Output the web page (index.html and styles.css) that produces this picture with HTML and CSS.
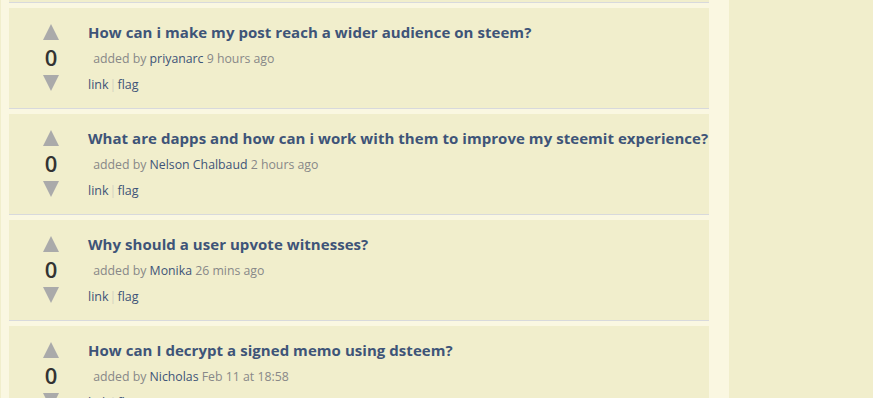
FILE: index.html
```html
<!DOCTYPE html>
<html>
<head>
<meta charset="utf-8">
<link rel="stylesheet" href="styles.css">
</head>
<body>
<div class="col">
  <div class="stub"></div>
  <div class="card">
    <div class="vote"><span class="up"></span><span class="score">0</span><span class="down"></span></div>
    <div class="body">
      <a class="title">How can i make my post reach a wider audience on steem?</a>
      <div class="meta">&nbsp;added by <a>priyanarc</a> 9 hours ago</div>
      <div class="actions"><a>link</a><span class="sep">|</span><a>flag</a></div>
    </div>
  </div>
  <div class="card">
    <div class="vote"><span class="up"></span><span class="score">0</span><span class="down"></span></div>
    <div class="body">
      <a class="title">What are dapps and how can i work with them to improve my steemit experience?</a>
      <div class="meta">&nbsp;added by <a>Nelson Chalbaud</a> 2 hours ago</div>
      <div class="actions"><a>link</a><span class="sep">|</span><a>flag</a></div>
    </div>
  </div>
  <div class="card">
    <div class="vote"><span class="up"></span><span class="score">0</span><span class="down"></span></div>
    <div class="body">
      <a class="title">Why should a user upvote witnesses?</a>
      <div class="meta">&nbsp;added by <a>Monika</a> 26 mins ago</div>
      <div class="actions"><a>link</a><span class="sep">|</span><a>flag</a></div>
    </div>
  </div>
  <div class="card">
    <div class="vote"><span class="up"></span><span class="score">0</span><span class="down"></span></div>
    <div class="body">
      <a class="title">How can I decrypt a signed memo using dsteem?</a>
      <div class="meta">&nbsp;added by <a>Nicholas</a> Feb 11 at 18:58</div>
      <div class="actions"><a>link</a><span class="sep">|</span><a>flag</a></div>
    </div>
  </div>
</div>
</body>
</html>
```
FILE: styles.css
```css
html, body {
  margin: 0;
  padding: 0;
  background: #f1eecc;
  height: 100%;
  overflow: hidden;
}
body {
  font-family: "Open Sans", "Noto Sans", sans-serif;
}
.col {
  width: 700px;
  margin-left: 1px;
  padding: 0 20px 0 8px;
  background: #faf7e1;
  min-height: 100%;
}
.stub {
  height: 2px;
  background: #f1eecc;
  border-bottom: 1px solid #d8d9dc;
  margin-bottom: 5px;
}
.card {
  display: flex;
  height: 84px;
  padding: 16px 0 0 22px;
  background: #f1eecc;
  border-bottom: 1px solid #d8d9dc;
  margin-bottom: 5px;
  gap: 17px;
}
.vote {
  width: 40px;
  display: flex;
  flex-direction: column;
  align-items: center;
}
.up {
  width: 0;
  height: 0;
  border-left: 8px solid transparent;
  border-right: 8px solid transparent;
  border-bottom: 16px solid #aaaaaa;
}
.down {
  width: 0;
  height: 0;
  border-left: 8px solid transparent;
  border-right: 8px solid transparent;
  border-top: 16px solid #aaaaaa;
  margin-top: 1px;
}
.score {
  font-size: 22px;
  line-height: 34px;
  font-weight: 600;
  color: #333333;
}
.body {
  display: flex;
  flex-direction: column;
  white-space: nowrap;
}
.title {
  font-size: 15px;
  font-weight: 700;
  color: #3e5478;
  line-height: 16px;
  letter-spacing: 0.05px;
}
.meta {
  font-size: 12.3px;
  line-height: 20px;
  margin-top: 9px;
  margin-left: 2px;
  color: #888888;
}
.meta a, .actions a {
  color: #3e5478;
}
.actions {
  font-size: 12.5px;
  line-height: 20px;
  margin-top: 6px;
}
.sep {
  color: #d3d3c0;
  margin: 0 1px;
}
```
